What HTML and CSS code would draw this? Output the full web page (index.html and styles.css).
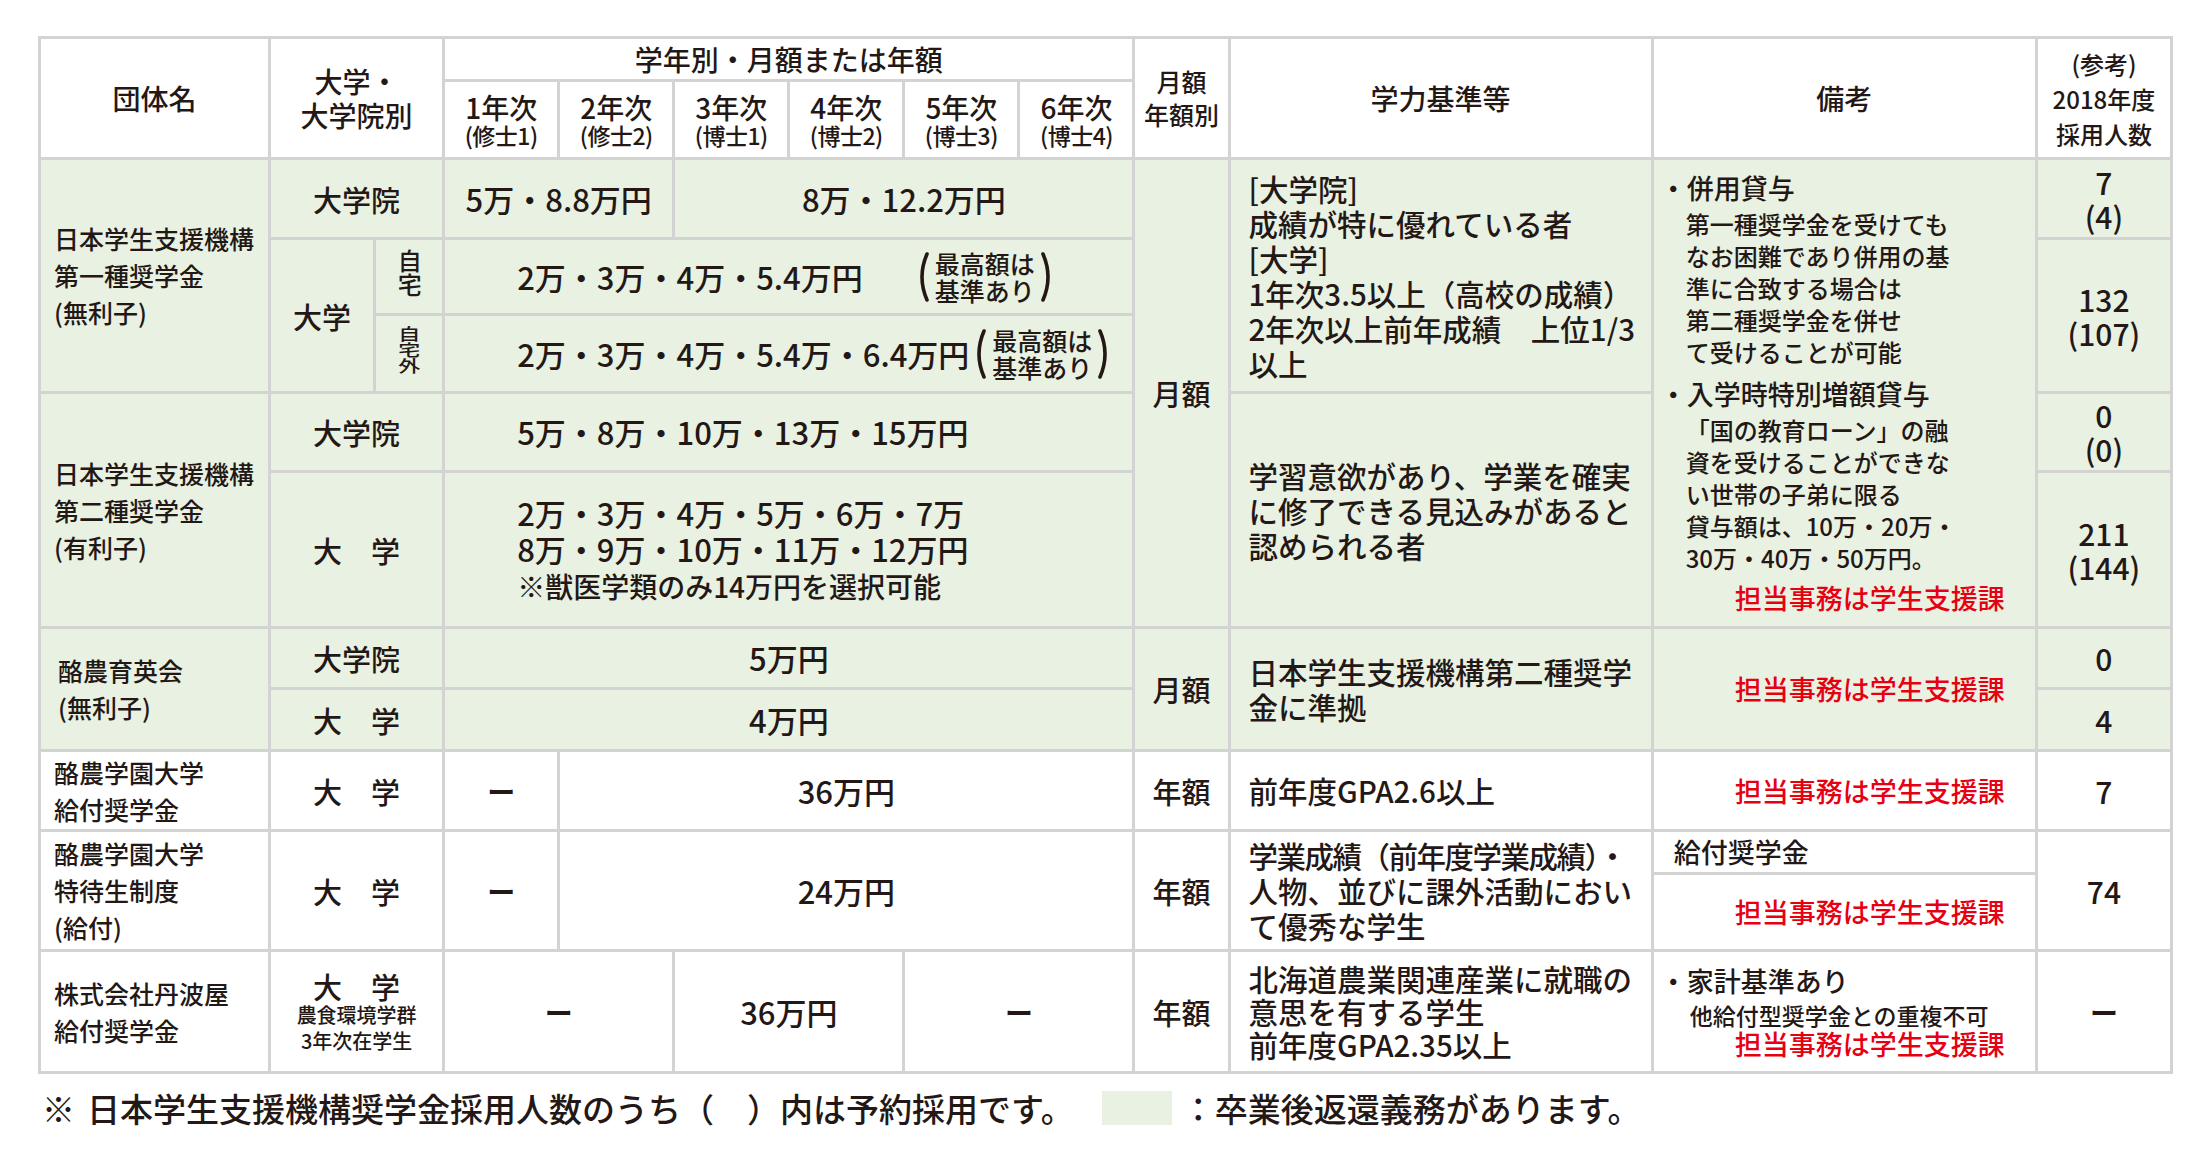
FILE: index.html
```html
<!DOCTYPE html>
<html lang="ja">
<head>
<meta charset="utf-8">
<title>奨学金一覧</title>
<link rel="stylesheet" href="styles.css">
</head>
<body>
<div class="page">
<table class="sch">
  <colgroup>
    <col class="c-org"><col class="c-k1"><col class="c-k2">
    <col class="c-y"><col class="c-y"><col class="c-y"><col class="c-y"><col class="c-y"><col class="c-y">
    <col class="c-freq"><col class="c-crit"><col class="c-note"><col class="c-ref">
  </colgroup>
  <tr class="h-h1">
    <th class="head" rowspan="2">団体名</th>
    <th class="head" colspan="2" rowspan="2">大学・<br>大学院別</th>
    <th class="head" colspan="6">学年別・月額または年額</th>
    <th class="head-s" rowspan="2">月額<br>年額別</th>
    <th class="head" rowspan="2">学力基準等</th>
    <th class="head" rowspan="2">備考</th>
    <th class="head-r" rowspan="2">(参考)<br>2018年度<br>採用人数</th>
  </tr>
  <tr class="h-h2">
    <th class="yr"><span class="y">1年次</span><span class="ys">(修士1)</span></th>
    <th class="yr"><span class="y">2年次</span><span class="ys">(修士2)</span></th>
    <th class="yr"><span class="y">3年次</span><span class="ys">(博士1)</span></th>
    <th class="yr"><span class="y">4年次</span><span class="ys">(博士2)</span></th>
    <th class="yr"><span class="y">5年次</span><span class="ys">(博士3)</span></th>
    <th class="yr"><span class="y">6年次</span><span class="ys">(博士4)</span></th>
  </tr>

  <tr class="h-a1 g">
    <td class="org" rowspan="3">日本学生支援機構<br>第一種奨学金<br>(無利子)</td>
    <td class="kind" colspan="2">大学院</td>
    <td class="amt" colspan="2">5万・8.8万円</td>
    <td class="amt" colspan="4">8万・12.2万円</td>
    <td class="freq" rowspan="5">月額</td>
    <td class="crit" rowspan="3">[大学院]<br>成績が特に優れている者<br>[大学]<br>1年次3.5以上（高校の成績）<br>2年次以上前年成績　上位1/3<br>以上</td>
    <td class="note" rowspan="5">
      <div class="hd">・併用貸与</div>
      <div class="bd">第一種奨学金を受けても<br>なお困難であり併用の基<br>準に合致する場合は<br>第二種奨学金を併せ<br>て受けることが可能</div>
      <div class="hd hd2">・入学時特別増額貸与</div>
      <div class="bd">「国の教育ローン」の融<br>資を受けることができな<br>い世帯の子弟に限る<br>貸与額は、10万・20万・<br>30万・40万・50万円。</div>
      <div class="red red-gap">担当事務は学生支援課</div>
    </td>
    <td class="num">7<br>(4)</td>
  </tr>
  <tr class="h-a2 g">
    <td class="kind" rowspan="2">大学</td>
    <td class="sub"><span class="vt">自宅</span></td>
    <td class="amt amt-l" colspan="6">
      <div class="amt-row"><span>2万・3万・4万・5.4万円</span><span class="cap cap-gap"><svg class="par" viewBox="0 0 14 50"><path d="M11 2 Q1 25 11 48"/></svg><span class="cap-t">最高額は<br>基準あり</span><svg class="par" viewBox="0 0 14 50"><path d="M3 2 Q13 25 3 48"/></svg></span></div>
    </td>
    <td class="num" rowspan="2">132<br>(107)</td>
  </tr>
  <tr class="h-a3 g">
    <td class="sub"><span class="vt vt-sq">自宅外</span></td>
    <td class="amt amt-l" colspan="6">
      <div class="amt-row"><span>2万・3万・4万・5.4万・6.4万円</span><span class="cap cap-near"><svg class="par" viewBox="0 0 14 50"><path d="M11 2 Q1 25 11 48"/></svg><span class="cap-t">最高額は<br>基準あり</span><svg class="par" viewBox="0 0 14 50"><path d="M3 2 Q13 25 3 48"/></svg></span></div>
    </td>
  </tr>

  <tr class="h-b1 g">
    <td class="org" rowspan="2">日本学生支援機構<br>第二種奨学金<br>(有利子)</td>
    <td class="kind" colspan="2">大学院</td>
    <td class="amt amt-l" colspan="6">5万・8万・10万・13万・15万円</td>
    <td class="crit" rowspan="2">学習意欲があり、学業を確実<br>に修了できる見込みがあると<br>認められる者</td>
    <td class="num">0<br>(0)</td>
  </tr>
  <tr class="h-b2 g">
    <td class="kind" colspan="2">大　学</td>
    <td class="amt amt-l" colspan="6">2万・3万・4万・5万・6万・7万<br>8万・9万・10万・11万・12万円<br><span class="amt-note">※獣医学類のみ14万円を選択可能</span></td>
    <td class="num">211<br>(144)</td>
  </tr>

  <tr class="h-c1 g">
    <td class="org org-i" rowspan="2">酪農育英会<br>(無利子)</td>
    <td class="kind" colspan="2">大学院</td>
    <td class="amt" colspan="6">5万円</td>
    <td class="freq" rowspan="2">月額</td>
    <td class="crit" rowspan="2">日本学生支援機構第二種奨学<br>金に準拠</td>
    <td class="note" rowspan="2"><div class="red">担当事務は学生支援課</div></td>
    <td class="num">0</td>
  </tr>
  <tr class="h-c2 g">
    <td class="kind" colspan="2">大　学</td>
    <td class="amt" colspan="6">4万円</td>
    <td class="num">4</td>
  </tr>

  <tr class="h-d">
    <td class="org">酪農学園大学<br>給付奨学金</td>
    <td class="kind" colspan="2">大　学</td>
    <td class="dash">ー</td>
    <td class="amt" colspan="5">36万円</td>
    <td class="freq">年額</td>
    <td class="crit">前年度GPA2.6以上</td>
    <td class="note"><div class="red">担当事務は学生支援課</div></td>
    <td class="num">7</td>
  </tr>

  <tr class="h-e1">
    <td class="org" rowspan="2">酪農学園大学<br>特待生制度<br>(給付)</td>
    <td class="kind" colspan="2" rowspan="2">大　学</td>
    <td class="dash" rowspan="2">ー</td>
    <td class="amt" colspan="5" rowspan="2">24万円</td>
    <td class="freq" rowspan="2">年額</td>
    <td class="crit" rowspan="2"><span class="tight">学業成績（前年度学業成績）・</span><br>人物、並びに課外活動におい<br>て優秀な学生</td>
    <td class="note note-top">給付奨学金</td>
    <td class="num" rowspan="2">74</td>
  </tr>
  <tr class="h-e2">
    <td class="note"><div class="red">担当事務は学生支援課</div></td>
  </tr>

  <tr class="h-f">
    <td class="org">株式会社丹波屋<br>給付奨学金</td>
    <td class="kind kind-f" colspan="2"><span class="kf-main">大　学</span><span class="kf-sub">農食環境学群<br>3年次在学生</span></td>
    <td class="dash" colspan="2">ー</td>
    <td class="amt" colspan="2">36万円</td>
    <td class="dash" colspan="2">ー</td>
    <td class="freq">年額</td>
    <td class="crit crit-f">北海道農業関連産業に就職の<br>意思を有する学生<br>前年度GPA2.35以上</td>
    <td class="note">
      <div class="hd hd-f">・家計基準あり</div>
      <div class="bd-s">他給付型奨学金との重複不可</div>
      <div class="red red-f">担当事務は学生支援課</div>
    </td>
    <td class="dash">ー</td>
  </tr>
</table>

<div class="foot">
  <span class="kome">※</span>
  <span>日本学生支援機構奨学金採用人数のうち（　）内は予約採用です。</span>
  <span class="legend-box"></span>
  <span>：卒業後返還義務があります。</span>
</div>
</div>
</body>
</html>
```

FILE: styles.css
```css
html, body {
  margin: 0;
  padding: 0;
  background: #ffffff;
}

body {
  font-family: "Noto Sans CJK JP", "Noto Sans", sans-serif;
  font-weight: 500;
  color: #231815;
}

.page {
  padding: 36px 0 0 38px;
}

.sch {
  border-collapse: collapse;
  table-layout: fixed;
  width: 2135px;
}

.sch th,
.sch td {
  border: 3px solid #d3d3d3;
  padding: 0;
  vertical-align: middle;
  text-align: center;
  font-weight: 500;
}

.c-org { width: 230px; }
.c-k1 { width: 105px; }
.c-k2 { width: 69px; }
.c-y { width: 115px; }
.c-freq { width: 95px; }
.c-crit { width: 423px; }
.c-note { width: 384px; }
.c-ref { width: 135px; }

.h-h1 { height: 43px; }
.h-h2 { height: 78px; }
.h-a1 { height: 80px; }
.h-a2 { height: 76px; }
.h-a3 { height: 78px; }
.h-b1 { height: 79px; }
.h-b2 { height: 156px; }
.h-c1 { height: 61px; }
.h-c2 { height: 62px; }
.h-d { height: 80px; }
.h-e1 { height: 43px; }
.h-e2 { height: 77px; }
.h-f { height: 122px; }

.g td { background: #e8f1e2; }

/* header */
.head {
  font-size: 28px;
  line-height: 34px;
}

.head-s {
  font-size: 25px;
  line-height: 33px;
}

.head-r {
  font-size: 24px;
  line-height: 35px;
}

.yr .y {
  display: block;
  font-size: 28px;
  line-height: 30px;
}

.yr .ys {
  display: block;
  font-size: 23px;
  line-height: 26px;
  letter-spacing: -0.5px;
}

/* body cells */
.org {
  text-align: left !important;
  padding-left: 13px !important;
  font-size: 25px;
  line-height: 37px;
  white-space: nowrap;
}

.org-i {
  padding-left: 17px !important;
}

.kind {
  font-size: 29px;
  line-height: 34px;
}

.kind-f {
  line-height: 1;
}

.kf-main {
  display: block;
  font-size: 29px;
  line-height: 32px;
}

.kf-sub {
  display: block;
  font-size: 20px;
  line-height: 26px;
}

.sub {
  font-size: 24px;
}

.vt {
  display: inline-block;
  writing-mode: vertical-rl;
  line-height: 1;
  letter-spacing: 0;
}

.vt-sq {
  font-size: 22px;
  transform: scaleY(0.74);
}

.amt {
  font-size: 31px;
  line-height: 36px;
  white-space: nowrap;
}

.amt-l {
  text-align: left !important;
  padding-left: 72px !important;
}

.amt-note {
  font-size: 28px;
}

.amt-row {
  display: flex;
  align-items: center;
}

.cap {
  display: inline-flex;
  align-items: center;
}

.cap-gap {
  margin-left: 53px;
}

.cap-near {
  margin-left: 4px;
}

.cap-t {
  font-size: 25px;
  line-height: 27px;
  margin: 0 5px;
}

.par {
  width: 14px;
  height: 52px;
  fill: none;
  stroke: #231815;
  stroke-width: 3.6;
  stroke-linecap: round;
}

.dash {
  font-size: 28px;
  font-weight: 700 !important;
}

.freq {
  font-size: 29px;
}

.crit {
  text-align: left !important;
  padding-left: 18px !important;
  font-size: 29.5px;
  line-height: 35px;
  white-space: nowrap;
}

.tight {
  letter-spacing: -1.5px;
}

.crit-f {
  line-height: 33px;
}

.note {
  text-align: left !important;
  padding-left: 6px !important;
  font-size: 27px;
  line-height: 32px;
  white-space: nowrap;
}

.note .hd {
  margin-bottom: 4px;
}

.note .hd2 {
  margin-top: 10px;
}

.note .bd {
  font-size: 24px;
  padding-left: 26px;
}

.note-top {
  padding-left: 20px !important;
}

.hd-f {
  margin-bottom: 2px;
}

.bd-s {
  font-size: 23px;
  line-height: 28px;
  padding-left: 30px;
}

.red {
  color: #e60012;
  text-align: right;
  padding-right: 30px;
}

.red-gap {
  margin-top: 8px;
}

.red-f {
  line-height: 30px;
}

.num {
  font-size: 30px;
  line-height: 34px;
}

/* footer */
.foot {
  display: flex;
  align-items: center;
  margin-top: 12px;
  font-size: 33px;
  line-height: 44px;
  padding-left: 4px;
}

.kome {
  margin-right: 12px;
}

.legend-box {
  display: inline-block;
  width: 70px;
  height: 34px;
  background: #e8f1e2;
  margin: 0 10px 0 28px;
}
```
